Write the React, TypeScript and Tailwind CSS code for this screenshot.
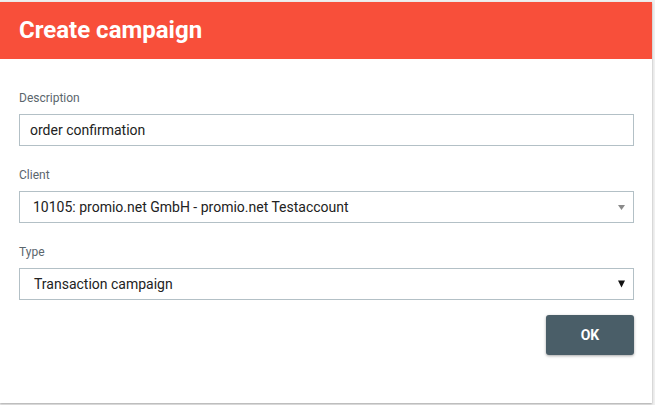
import React from 'react';

const font = { fontFamily: 'Roboto, "Liberation Sans", Arial, sans-serif' };

const Label: React.FC<{ children: React.ReactNode }> = ({ children }) => (
  <div className="mb-2 h-4 text-[12px] leading-4 text-[#5b666d]">{children}</div>
);

const Caret: React.FC<{ dark?: boolean }> = ({ dark }) =>
  dark ? (
    <svg width="7" height="8" viewBox="0 0 7 8" className="shrink-0">
      <path d="M0 0.5h7L3.5 7.5z" fill="#111" />
    </svg>
  ) : (
    <svg width="7" height="5" viewBox="0 0 7 5" className="shrink-0">
      <path d="M0 0h7L3.5 5z" fill="#8a8a8a" />
    </svg>
  );

export default function App() {
  return (
    <div className="min-h-screen bg-[#efefef] pt-[2px]" style={font}>
      <div className="flex h-[401px] w-[652px] flex-col bg-white shadow-[0_1px_2px_rgba(0,0,0,0.3)]">
        <div className="flex h-[57px] shrink-0 items-center bg-[#f84f3a] px-[19px]">
          <h1 className="pb-[2px] text-[24px] font-bold text-white">Create campaign</h1>
        </div>

        <div className="flex flex-col px-[19px] pt-[31px] pr-[18px]">
          <div>
            <Label>Description</Label>
            <div className="flex h-8 items-center border border-[#b3c0c6] px-[10px] text-[14px] text-[#222]">
              order confirmation
            </div>
          </div>

          <div className="mt-[21px]">
            <Label>Client</Label>
            <div className="flex h-8 items-center justify-between border border-[#b3c0c6] pr-[8px] pl-[13px] text-[14px] text-[#222]">
              <span>10105: promio.net GmbH - promio.net Testaccount</span>
              <Caret />
            </div>
          </div>

          <div className="mt-[21px]">
            <Label>Type</Label>
            <div className="flex h-8 items-center justify-between border border-[#b3c0c6] pr-[8px] pl-[14px] text-[14px] text-[#222]">
              <span>Transaction campaign</span>
              <Caret dark />
            </div>
          </div>

          <div className="mt-[15px] flex justify-end">
            <button className="h-10 w-[88px] rounded-[3px] bg-[#4a5e68] text-[14px] font-bold text-white shadow-[0_1px_3px_rgba(0,0,0,0.35)]">
              OK
            </button>
          </div>
        </div>
      </div>
    </div>
  );
}
